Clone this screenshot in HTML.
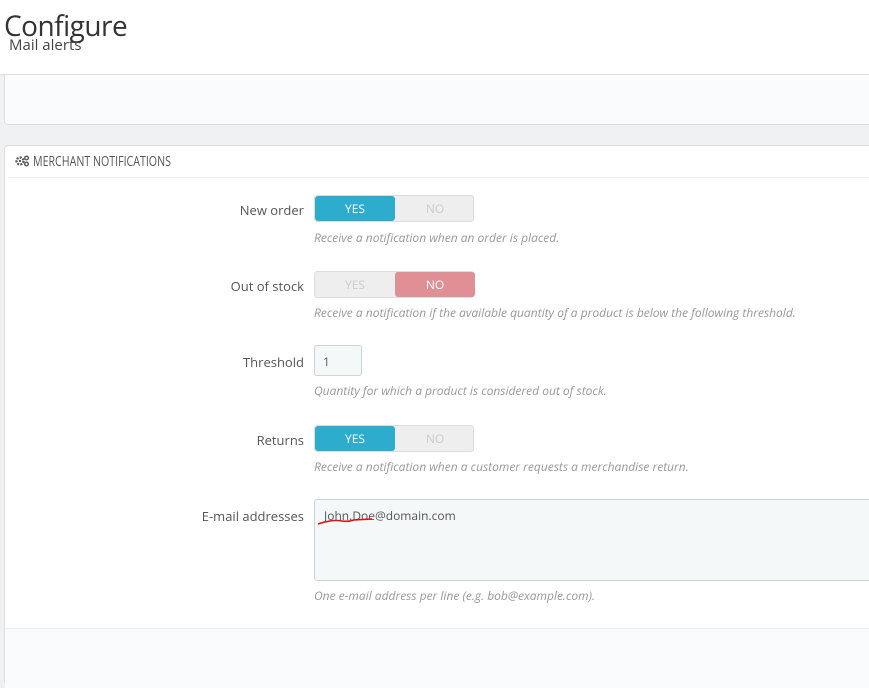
<!DOCTYPE html>
<html><head><style>
*{margin:0;padding:0;box-sizing:border-box}
body{width:869px;height:676px;overflow:hidden;background:#eff1f2;font-family:"Open Sans","Liberation Sans",sans-serif;position:relative;color:#555}
.top{position:absolute;left:0;top:0;width:869px;height:75px;background:#fff;border-bottom:1px solid #dcdfe1}
h1{position:absolute;left:4px;top:7px;font-size:28px;font-weight:normal;color:#333;letter-spacing:-0.5px}
.sub{position:absolute;left:9px;top:35px;font-size:15px;color:#444}
.p1{position:absolute;left:4px;top:75px;width:880px;height:50px;background:#fafbfc;border:1px solid #dcdfe1;border-top:none;border-radius:0 0 4px 4px}
.p2{position:absolute;left:4px;top:145px;width:880px;height:540px;background:#fff;border:1px solid #dcdfe1;border-radius:4px}
.hd{position:absolute;left:4px;top:0;width:870px;height:32px;border-bottom:1px solid #eee;font-size:14px;color:#555}
.hd b{position:absolute;left:24px;top:6px;font-weight:normal;white-space:nowrap;transform:scaleX(0.76);transform-origin:left}
.ft{position:absolute;left:0;top:482px;width:880px;height:60px;background:#fafbfc;border-top:1px solid #eee}
.lbl{position:absolute;right:565px;font-size:13px;color:#555;text-align:right;white-space:nowrap}
.sw{position:absolute;left:314px;width:160px;height:27px;border-radius:3px;background:#eee;border:1px solid #ddd;font-size:12px}
.sw span{position:absolute;top:0;width:80px;height:25px;line-height:25px;text-align:center;color:#ccc}
.sw .y{left:0}.sw .n{left:80px}
.on-b{background:#2eacce!important;color:#fff!important;border-radius:3px}
.on-r{background:#e08f95!important;color:#fff!important;border-radius:3px}
.help{position:absolute;left:314px;font-size:12px;font-style:italic;color:#999;white-space:nowrap}
.inp{position:absolute;left:314px;top:345px;width:48px;height:31px;border:1px solid #c7d6db;border-radius:3px;background:#f5f8f9;font-size:12px;color:#555;padding:7px 0 0 8px}
.ta{position:absolute;left:314px;top:499px;width:570px;height:82px;border:1px solid #c7d6db;border-radius:3px;background:#f5f8f9;font-size:12px;color:#555;padding:7px 0 0 9px}
</style></head><body>
<div class="top"><h1>Configure</h1><div class="sub">Mail alerts</div></div>
<div class="p1"></div>
<div class="p2">
 <div class="hd"><svg style="position:absolute;left:6px;top:9px" width="15" height="12" viewBox="0 0 15 12"><circle cx="5" cy="6" r="3.5" fill="none" stroke="#555" stroke-width="2.2" stroke-dasharray="2 1.2"/><circle cx="5" cy="6" r="1.2" fill="#555"/><circle cx="11.5" cy="3" r="1.8" fill="none" stroke="#555" stroke-width="1.4"/><circle cx="11.5" cy="9" r="1.8" fill="none" stroke="#555" stroke-width="1.4"/></svg><b>MERCHANT NOTIFICATIONS</b></div>
 <div class="ft"></div>
</div>
<div class="lbl" style="top:201px">New order</div>
<div class="sw" style="top:195px"><span class="y on-b">YES</span><span class="n">NO</span></div>
<div class="help" style="top:229px">Receive a notification when an order is placed.</div>
<div class="lbl" style="top:277px">Out of stock</div>
<div class="sw" style="top:271px"><span class="y">YES</span><span class="n on-r">NO</span></div>
<div class="help" style="top:304px">Receive a notification if the available quantity of a product is below the following threshold.</div>
<div class="lbl" style="top:353px">Threshold</div>
<div class="inp">1</div>
<div class="help" style="top:382px">Quantity for which a product is considered out of stock.</div>
<div class="lbl" style="top:431px">Returns</div>
<div class="sw" style="top:425px"><span class="y on-b">YES</span><span class="n">NO</span></div>
<div class="help" style="top:458px">Receive a notification when a customer requests a merchandise return.</div>
<div class="lbl" style="top:507px">E-mail addresses</div>
<div class="ta">John.Doe@domain.com</div>
<svg style="position:absolute;left:316px;top:517px" width="60" height="10"><path d="M2 7 Q8 5 14 4 T26 4 T38 3 L56 2" fill="none" stroke="#d11" stroke-width="1.6"/></svg>
<div class="help" style="top:587px">One e-mail address per line (e.g. bob@example.com).</div>
</body></html>
